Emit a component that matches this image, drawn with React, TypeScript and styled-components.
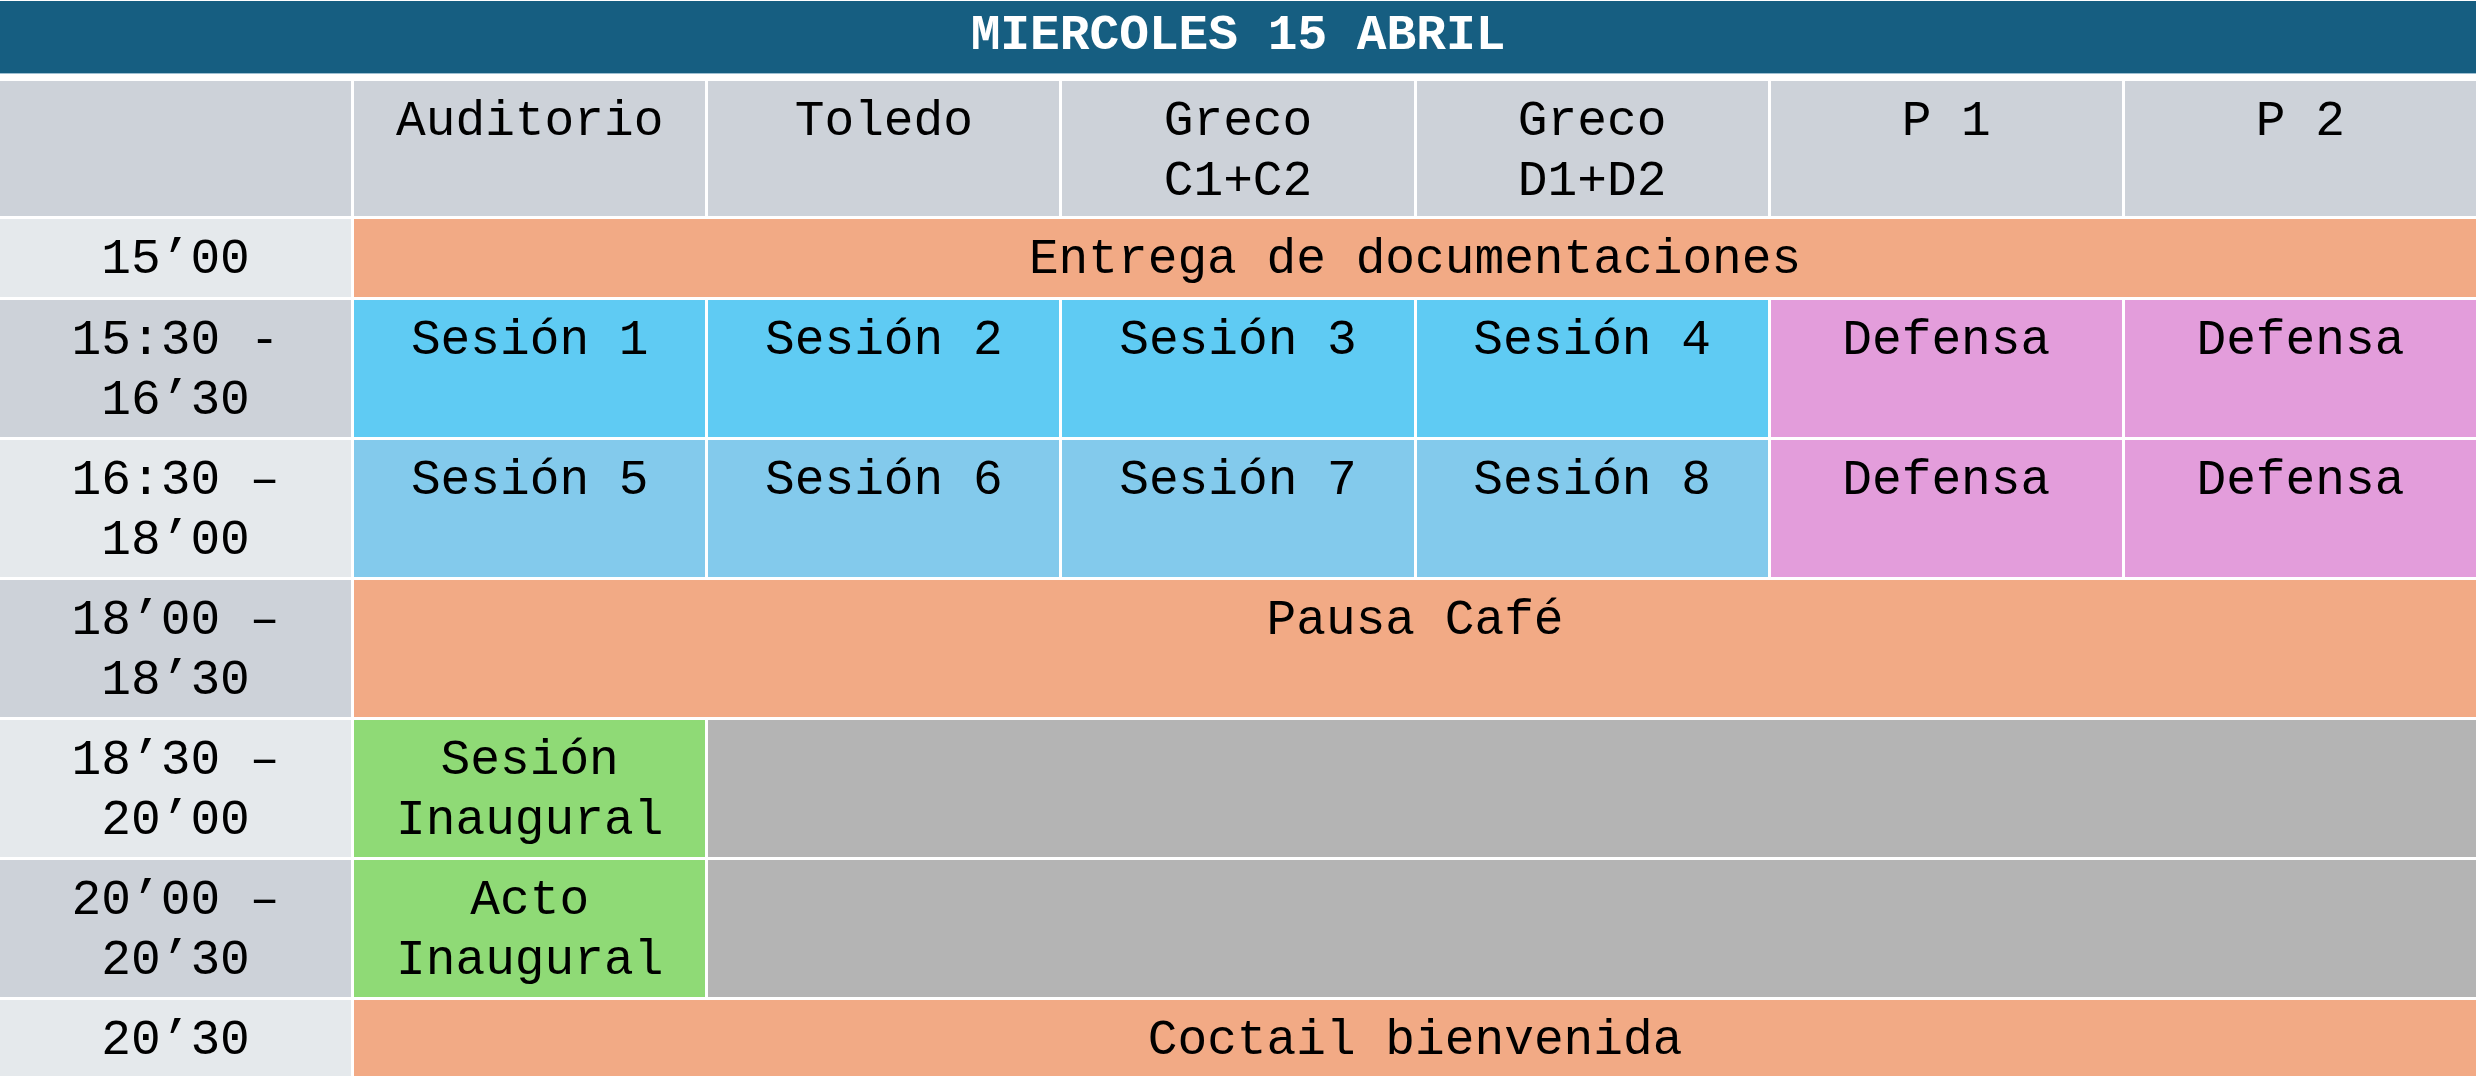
import styled, { createGlobalStyle } from "styled-components";

const GlobalStyle = createGlobalStyle`
  html, body {
    margin: 0;
    padding: 0;
    background: #ffffff;
  }
  body {
    font-family: "Liberation Mono", "Courier New", monospace;
  }
`;

const Page = styled.div`
  width: 2476px;
  padding-top: 1px;
  overflow: hidden;
  height: 1075px;
`;

const Title = styled.div`
  height: 72px;
  background: #165e81;
  border-bottom: 1px solid #9fc0d2;
  color: #ffffff;
  font-weight: 700;
  font-size: 49.5px;
  line-height: 71px;
  text-align: center;
  margin-bottom: 7px;
  white-space: pre;
`;

const Grid = styled.div`
  display: grid;
  grid-template-columns: repeat(7, 1fr);
  grid-template-rows: 135px 78px repeat(5, 137px) 78px;
  gap: 3px;
`;

const Cell = styled.div<{ $bg: string; $span?: number }>`
  background: ${(p) => p.$bg};
  grid-column: span ${(p) => p.$span ?? 1};
  color: #000000;
  font-size: 49.5px;
  line-height: 60px;
  padding-top: 11px;
  text-align: center;
  white-space: pre;
  box-sizing: border-box;
`;

const colors = {
  head: "#cdd2d9",
  light: "#e5e9ec",
  orange: "#f2aa85",
  cyan: "#5fcbf3",
  sky: "#83caec",
  pink: "#e39ddb",
  green: "#8fda76",
  gray: "#b4b4b4",
};

type C = { text: string; bg: string; span?: number };

const rows: C[][] = [
  [
    { text: "", bg: colors.head },
    { text: "Auditorio", bg: colors.head },
    { text: "Toledo", bg: colors.head },
    { text: "Greco\nC1+C2", bg: colors.head },
    { text: "Greco\nD1+D2", bg: colors.head },
    { text: "P 1", bg: colors.head },
    { text: "P 2", bg: colors.head },
  ],
  [
    { text: "15’00", bg: colors.light },
    { text: "Entrega de documentaciones", bg: colors.orange, span: 6 },
  ],
  [
    { text: "15:30 -\n16’30", bg: colors.head },
    { text: "Sesión 1", bg: colors.cyan },
    { text: "Sesión 2", bg: colors.cyan },
    { text: "Sesión 3", bg: colors.cyan },
    { text: "Sesión 4", bg: colors.cyan },
    { text: "Defensa", bg: colors.pink },
    { text: "Defensa", bg: colors.pink },
  ],
  [
    { text: "16:30 –\n18’00", bg: colors.light },
    { text: "Sesión 5", bg: colors.sky },
    { text: "Sesión 6", bg: colors.sky },
    { text: "Sesión 7", bg: colors.sky },
    { text: "Sesión 8", bg: colors.sky },
    { text: "Defensa", bg: colors.pink },
    { text: "Defensa", bg: colors.pink },
  ],
  [
    { text: "18’00 –\n18’30", bg: colors.head },
    { text: "Pausa Café", bg: colors.orange, span: 6 },
  ],
  [
    { text: "18’30 –\n20’00", bg: colors.light },
    { text: "Sesión\nInaugural", bg: colors.green },
    { text: "", bg: colors.gray, span: 5 },
  ],
  [
    { text: "20’00 –\n20’30", bg: colors.head },
    { text: "Acto\nInaugural", bg: colors.green },
    { text: "", bg: colors.gray, span: 5 },
  ],
  [
    { text: "20’30", bg: colors.light },
    { text: "Coctail bienvenida", bg: colors.orange, span: 6 },
  ],
];

export default function App() {
  return (
    <>
      <GlobalStyle />
      <Page>
        <Title>MIERCOLES 15 ABRIL</Title>
        <Grid>
          {rows.map((row, i) =>
            row.map((c, j) => (
              <Cell key={`${i}-${j}`} $bg={c.bg} $span={c.span}>
                {c.text}
              </Cell>
            ))
          )}
        </Grid>
      </Page>
    </>
  );
}
